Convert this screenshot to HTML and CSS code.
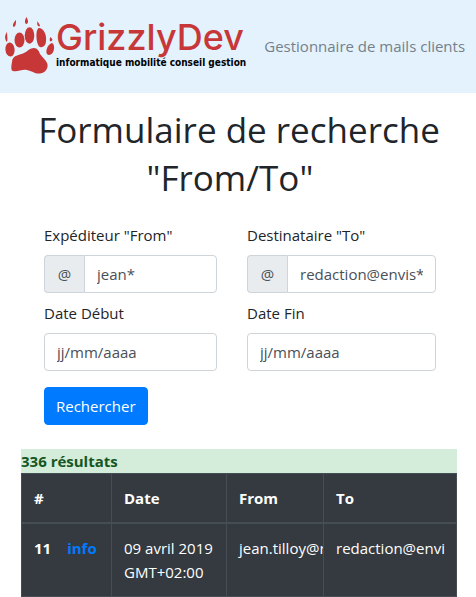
FILE: index.html
```html
<!DOCTYPE html>
<html lang="fr">
<head>
<meta charset="utf-8">
<meta name="viewport" content="width=device-width, initial-scale=1">
<title>GrizzlyDev</title>
<link rel="stylesheet" href="styles.css">
</head>
<body>
<header class="navbar">
  <a class="brand" href="#">
    <svg class="paw" viewBox="0 0 52 60" aria-hidden="true">
      <path d="M30 31C26 31 24 34 20 36C16 38 8 38 8 45C7 50 7 54 9 54C14 55 18 52 23 53C28 54 31 57 36 56.500C42 56 45 50 43 46C42 43 39 41 36 37C35 34 33 31 30 31Z"/>
      <ellipse cx="6" cy="32.500" rx="4.600" ry="7" transform="rotate(-5 6 32.500)"/>
      <ellipse cx="15.500" cy="23" rx="5" ry="7.500"/>
      <ellipse cx="25.500" cy="18.500" rx="4.800" ry="8.300"/>
      <path d="M35 11C39 11 43 17 42 24C42 28 39 31 36 30C32 28 31 12 35 11Z"/>
      <path d="M48 26C52 28 50 38 45 38C41 38 42 31 45 28C46 27 47 26 48 26Z"/>
      <path d="M3 15C0 19 1 23 3 25C4 22 3 19 3 15ZM12 3C9 6 8 9 10 10C12 9 12 6 12 3ZM22.500 0C20 4 21 7 22.500 7C25 6 24 3 22.500 0ZM33.500 4C34 6 37 8 35.500 9.500C33 9 33 7 33.500 4ZM46 20C49 22 49 23 47 24.500C45 24 46 22 46 20Z"/>
    </svg>
    <span class="wordmark">
      <span class="name">GrizzlyDev</span>
      <span class="tagline">informatique mobilité conseil gestion</span>
    </span>
  </a>
  <span class="subtitle">Gestionnaire de mails clients</span>
</header>
<main class="page">
  <h1 class="title">Formulaire de recherche "From/To"&nbsp;&nbsp;</h1>
  <form class="search">
    <div class="field">
      <label for="from">Expéditeur "From"</label>
      <div class="group"><span class="prefix">@</span><input class="control" id="from" type="text" value="jean*"></div>
    </div>
    <div class="field">
      <label for="to">Destinataire "To"</label>
      <div class="group"><span class="prefix">@</span><input class="control" id="to" type="text" value="redaction@envis*"></div>
    </div>
    <div class="field">
      <label for="start">Date Début</label>
      <input class="control" id="start" type="text" placeholder="jj/mm/aaaa">
    </div>
    <div class="field">
      <label for="end">Date Fin</label>
      <input class="control" id="end" type="text" placeholder="jj/mm/aaaa">
    </div>
    <button class="submit" type="submit">Rechercher</button>
  </form>
  <section class="results">
    <p class="count">336 résultats</p>
    <table class="mails">
      <colgroup><col class="col-id"><col class="col-date"><col class="col-from"><col></colgroup>
      <thead>
        <tr><th scope="col">#</th><th scope="col">Date</th><th scope="col">From</th><th scope="col">To</th></tr>
      </thead>
      <tbody>
        <tr>
          <th scope="row">11<a class="info" href="#">info</a></th>
          <td>09 avril 2019 GMT+02:00</td>
          <td class="mail">jean.tilloy@r</td>
          <td class="mail">redaction@envi</td>
        </tr>
      </tbody>
    </table>
  </section>
</main>
</body>
</html>
```
FILE: styles.css
```css
* { box-sizing: border-box; }

body {
  margin: 0;
  background: #fff;
  color: #212529;
  font: 15px/24px "Open Sans", "Noto Sans", sans-serif;
}

.navbar {
  display: flex;
  align-items: center;
  gap: 18px;
  height: 93px;
  padding: 0 4px;
  background: #e3f2fd;
  white-space: nowrap;
}

.brand {
  display: flex;
  align-items: center;
  color: #c83737;
  text-decoration: none;
}

.paw {
  width: 52px;
  height: 60px;
  fill: #c83737;
}

.wordmark {
  display: flex;
  flex-direction: column;
  padding-bottom: 8px;
}

.name {
  font: 500 36px/40px Inter, sans-serif;
}

.tagline {
  color: #000;
  font: bold 10px/12px "DejaVu Sans Condensed", "DejaVu Sans", sans-serif;
}

.subtitle {
  padding-bottom: 2px;
  color: #75808a;
}

.page { padding: 13px 19px 0 21px; }

.title {
  margin: 0;
  font-size: 35px;
  font-weight: 400;
  line-height: 48px;
  text-align: center;
}

.search {
  display: grid;
  grid-template-columns: 173fr 189fr;
  column-gap: 30px;
  row-gap: 8px;
  margin: 21px 21px 24px 23px;
}

.field {
  display: flex;
  flex-direction: column;
  gap: 8px;
  min-width: 0;
}

.group { display: flex; }

.prefix {
  flex: 0 0 40px;
  padding: 6px 0;
  border: 1px solid #ced4da;
  border-right: 0;
  border-radius: 4px 0 0 4px;
  background: #e9ecef;
  color: #495057;
  text-align: center;
}

.control {
  width: 100%;
  min-width: 0;
  height: 38px;
  padding: 6px 12px;
  border: 1px solid #ced4da;
  border-radius: 4px;
  background: #fff;
  color: #495057;
  font: inherit;
}

.control::placeholder {
  color: #495057;
  opacity: 1;
}

.group .control { border-radius: 0 4px 4px 0; }

.submit {
  justify-self: start;
  height: 38px;
  margin-top: 8px;
  padding: 6px 11px;
  border: 1px solid #007bff;
  border-radius: 4px;
  background: #007bff;
  color: #fff;
  font: inherit;
}

.count {
  margin: 0;
  background: #d4edda;
  color: #155724;
  font-weight: 700;
}

.mails {
  width: 100%;
  border-collapse: collapse;
  table-layout: fixed;
  background: #343a40;
  color: #fff;
}

.mails th,
.mails td {
  padding: 12px;
  border: 1px solid #454d55;
  text-align: left;
  vertical-align: top;
}

.mails thead th { border-bottom-width: 2px; }

.col-id { width: 90px; }
.col-date { width: 115px; }
.col-from { width: 97px; }

.mails .mail {
  overflow: hidden;
  padding-right: 0;
  white-space: nowrap;
}

.info {
  margin-left: 16px;
  color: #007bff;
  text-decoration: none;
}
```
